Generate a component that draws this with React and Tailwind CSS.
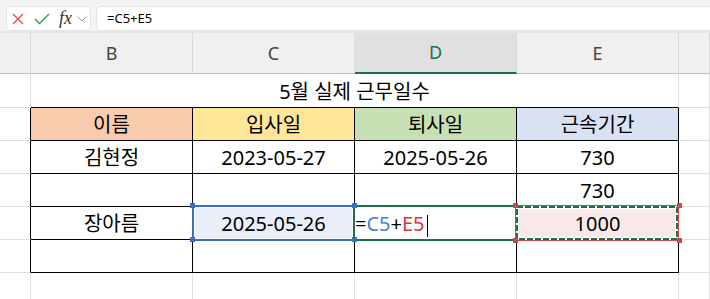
import React from "react";

const CELL = "font-['Noto_Sans','Noto_Sans_CJK_KR',sans-serif] text-[20px] leading-[20px] text-black";

function HeaderCell({ children, cls = "" }) {
  return (
    <div className={"h-[41px] flex items-center justify-center border-b border-r font-['Noto_Sans',sans-serif] text-[18px] " + cls}>
      {children}
    </div>
  );
}

export default function App() {
  return (
    <div className="w-[710px] h-[299px] overflow-hidden bg-white">
      {/* Formula bar */}
      <div className="h-[33px] bg-[#f3f3f3] border-b-[2px] border-[#e6e6e6] flex items-start pt-[6px]">
        <div className="ml-[6px] w-[85px] h-[25px] bg-white border border-[#e4e4e4] rounded-[5px] flex items-center pl-[5px]">
          <svg width="12" height="12" viewBox="0 0 12 12" className="shrink-0">
            <path d="M1 1 L11 11 M11 1 L1 11" stroke="#e0464b" strokeWidth="1.3" fill="none" />
          </svg>
          <svg width="16" height="12" viewBox="0 0 16 12" className="ml-[10px] shrink-0">
            <path d="M1 6 L5.5 10.5 L15 1" stroke="#2f9e57" strokeWidth="1.4" fill="none" />
          </svg>
          <span className="ml-[9px] font-['Liberation_Serif',serif] italic text-[18px] leading-none text-[#333] -mt-[2px]">fx</span>
          <svg width="10" height="6" viewBox="0 0 10 6" className="ml-[5px] shrink-0">
            <path d="M0.5 0.5 L5 5 L9.5 0.5" stroke="#9b9b9b" strokeWidth="1" fill="none" />
          </svg>
        </div>
        <div className="ml-[5px] flex-1 h-[25px] bg-white border border-r-0 border-[#e4e4e4] rounded-l-[5px] flex items-center pl-[10px] font-['Noto_Sans',sans-serif] text-[13px] text-black">
          =C5+E5
        </div>
      </div>

      {/* Sheet grid */}
      <div className="grid grid-cols-[31px_162px_162px_162px_162px_1fr]">
        {/* Column headers */}
        <HeaderCell cls="bg-[#f0f0f0] border-b-[#c2c2c2] border-r-[#d8d8d8]"></HeaderCell>
        <HeaderCell cls="bg-[#f0f0f0] border-b-[#c2c2c2] border-r-[#d8d8d8] text-[#444]">B</HeaderCell>
        <HeaderCell cls="bg-[#f0f0f0] border-b-[#c2c2c2] border-r-[#e0e0e0] text-[#444]">C</HeaderCell>
        <HeaderCell cls="bg-[#e0e0e0] border-b-2 border-b-[#1e7145] border-r-[#d8d8d8] text-[#1e7145]">D</HeaderCell>
        <HeaderCell cls="bg-[#f0f0f0] border-b-[#c2c2c2] border-r-[#d8d8d8] text-[#444]">E</HeaderCell>
        <HeaderCell cls="bg-[#f0f0f0] border-b-[#c2c2c2] border-r-[#d8d8d8]"></HeaderCell>

        {/* Row 1: title */}
        <div className="h-[34px] border-r border-b border-[#e0e0e0]"></div>
        <div className={"col-span-4 h-[34px] border-r border-r-[#e0e0e0] border-b border-b-black flex items-end justify-center pb-[5px] " + CELL}>
          5월 실제 근무일수
        </div>
        <div className="h-[34px] border-r border-b border-[#e0e0e0]"></div>

        {/* Row 2: header */}
        <div className="h-[33px] border-r border-r-black border-b border-b-[#e0e0e0]"></div>
        <div className={"h-[33px] border-r border-b border-black bg-[#f8cbad] flex items-end justify-center pb-[5px] " + CELL}>이름</div>
        <div className={"h-[33px] border-r border-b border-black bg-[#ffe699] flex items-end justify-center pb-[5px] " + CELL}>입사일</div>
        <div className={"h-[33px] border-r border-b border-black bg-[#c6e0b4] flex items-end justify-center pb-[5px] " + CELL}>퇴사일</div>
        <div className={"h-[33px] border-r border-b border-black bg-[#d9e1f2] flex items-end justify-center pb-[5px] " + CELL}>근속기간</div>
        <div className="h-[33px] border-r border-b border-[#e0e0e0]"></div>

        {/* Row 3 */}
        <div className="h-[33px] border-r border-r-black border-b border-b-[#e0e0e0]"></div>
        <div className={"h-[33px] border-r border-b border-black flex items-end justify-center pb-[5px] " + CELL}>김현정</div>
        <div className={"h-[33px] border-r border-b border-black flex items-end justify-center pb-[5px] " + CELL}>2023-05-27</div>
        <div className={"h-[33px] border-r border-b border-black flex items-end justify-center pb-[5px] " + CELL}>2025-05-26</div>
        <div className={"h-[33px] border-r border-b border-black flex items-end justify-center pb-[5px] " + CELL}>730</div>
        <div className="h-[33px] border-r border-b border-[#e0e0e0]"></div>

        {/* Row 4 */}
        <div className="h-[33px] border-r border-r-black border-b border-b-[#e0e0e0]"></div>
        <div className="h-[33px] border-r border-b border-black"></div>
        <div className="h-[33px] border-r border-b border-black"></div>
        <div className="h-[33px] border-r border-b border-black"></div>
        <div className={"h-[33px] border-r border-b border-black flex items-end justify-center pb-[5px] " + CELL}>730</div>
        <div className="h-[33px] border-r border-b border-[#e0e0e0]"></div>

        {/* Row 5 */}
        <div className="h-[33px] border-r border-r-black border-b border-b-[#e0e0e0]"></div>
        <div className={"h-[33px] border-r border-b border-black flex items-end justify-center pb-[5px] " + CELL}>장아름</div>
        <div className={"relative h-[33px] border-r border-b border-black bg-[#e9eef8] flex items-end justify-center pb-[5px] " + CELL}>
          <span className="relative">2025-05-26</span>
          <div className="absolute left-[-1px] top-[-2px] w-[163px] h-[36px] border-2 border-[#3b6fc5] z-10">
            <div className="w-full h-full border border-white"></div>
          </div>
          <div className="absolute left-[-3px] top-[-4px] w-[5px] h-[5px] bg-[#3b6fc5] z-30"></div>
          <div className="absolute right-[-3px] top-[-4px] w-[5px] h-[5px] bg-[#3b6fc5] z-30"></div>
          <div className="absolute left-[-3px] bottom-[-3px] w-[5px] h-[5px] bg-[#3b6fc5] z-30"></div>
          <div className="absolute right-[-3px] bottom-[-3px] w-[5px] h-[5px] bg-[#3b6fc5] z-30"></div>
        </div>
        <div className={"relative h-[33px] border-r border-b border-black flex items-end justify-start pb-[5px] " + CELL}>
          <span className="relative z-30 flex items-end">
            <span>=</span>
            <span className="text-[#3d7fd9]">C5</span>
            <span>+</span>
            <span className="text-[#d9363e]">E5</span>
            <span className="inline-block w-px h-[22px] bg-black ml-[2px] mb-[-3px]"></span>
          </span>
          <div className="absolute left-[-2px] top-[-2px] w-[164px] h-[36px] border-2 border-[#1e7145] z-20"></div>
        </div>
        <div className={"relative h-[33px] border-r border-b border-black flex items-end justify-center pb-[5px] " + CELL}>
          <div className="absolute left-[-2px] top-[-2px] w-[164px] h-[36px] border border-[#c8494c] bg-white z-40">
            <div className="absolute inset-[3px] bg-[#f9e9e9]"></div>
            <svg width="162" height="34" viewBox="0 0 162 34" className="absolute left-0 top-0">
              <rect x="1" y="1" width="160" height="32" fill="none" stroke="#1e7145" strokeWidth="2" strokeDasharray="6 2" />
            </svg>
          </div>
          <div className="absolute left-[-4px] top-[-4px] w-[5px] h-[5px] bg-[#c8494c] z-50"></div>
          <div className="absolute right-[-4px] top-[-4px] w-[5px] h-[5px] bg-[#c8494c] z-50"></div>
          <div className="absolute left-[-4px] bottom-[-4px] w-[5px] h-[5px] bg-[#c8494c] z-50"></div>
          <div className="absolute right-[-4px] bottom-[-4px] w-[5px] h-[5px] bg-[#c8494c] z-50"></div>
          <span className="relative z-50">1000</span>
        </div>
        <div className="h-[33px] border-r border-b border-[#e0e0e0]"></div>

        {/* Row 6 */}
        <div className="h-[33px] border-r border-r-black border-b border-b-[#e0e0e0]"></div>
        <div className="h-[33px] border-r border-b border-black"></div>
        <div className="h-[33px] border-r border-b border-black"></div>
        <div className="h-[33px] border-r border-b border-black"></div>
        <div className="h-[33px] border-r border-b border-black"></div>
        <div className="h-[33px] border-r border-b border-[#e0e0e0]"></div>

        {/* Row 7 */}
        <div className="h-[33px] border-r border-b border-[#e0e0e0]"></div>
        <div className="h-[33px] border-r border-b border-[#e0e0e0]"></div>
        <div className="h-[33px] border-r border-b border-[#e0e0e0]"></div>
        <div className="h-[33px] border-r border-b border-[#e0e0e0]"></div>
        <div className="h-[33px] border-r border-b border-[#e0e0e0]"></div>
        <div className="h-[33px] border-r border-b border-[#e0e0e0]"></div>
      </div>
    </div>
  );
}
